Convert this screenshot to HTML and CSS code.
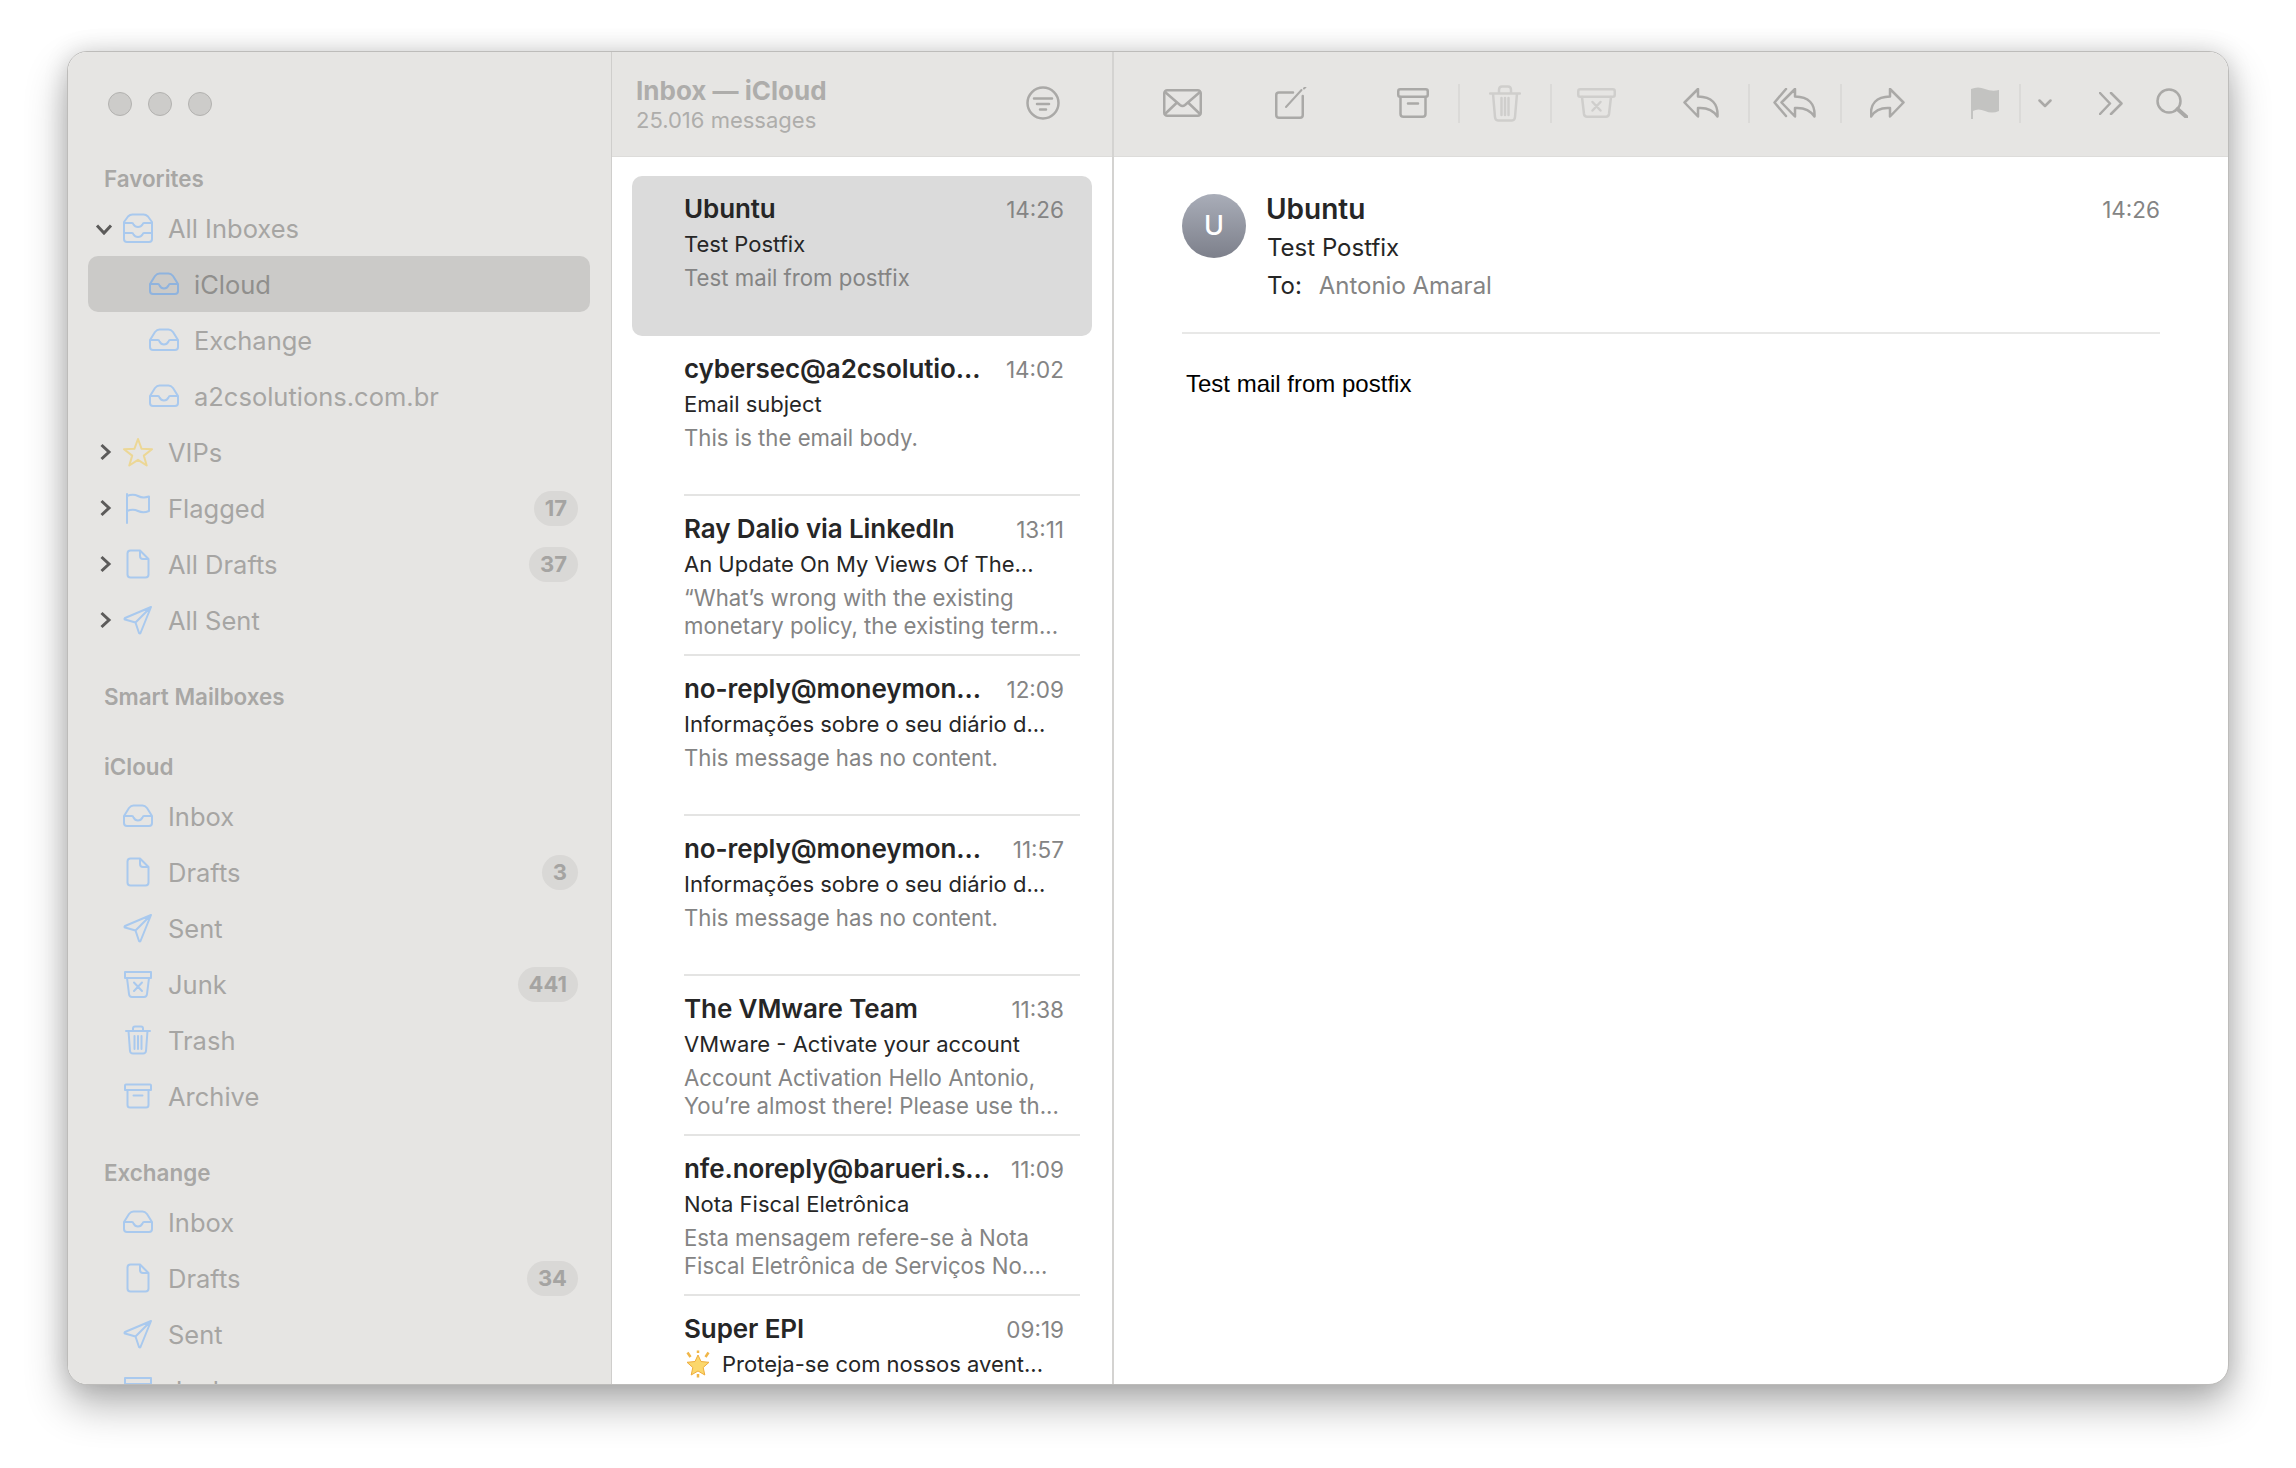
FILE: index.html
```html
<!DOCTYPE html>
<html lang="en">
<head>
    <meta charset="UTF-8">
    <meta name="viewport" content="width=device-width, initial-scale=1.0">
    <title>Inbox — iCloud</title>
    <link rel="stylesheet" href="styles.css">
</head>
<body>

<svg class="sprites" width="0" height="0">
    <symbol id="i-inbox" viewBox="0 0 32 32"><path d="M2 16 L7 8 Q9 5.500 11.500 5.500 H20.500 Q23 5.500 25 8 L30 16 V23 Q30 26 27 26 H5 Q2 26 2 23 Z M2 16 H10 Q11 16 11.500 17.500 Q13 20.500 16 20.500 Q19 20.500 20.500 17.500 Q21 16 22 16 H30"/></symbol>
    <symbol id="i-inboxes" viewBox="0 0 32 32"><path d="M2 10 L6 4.500 Q8 2.500 10.500 2.500 H21.500 Q24 2.500 26 4.500 L30 10 V27 Q30 30 27 30 H5 Q2 30 2 27 Z M2 11 H10 Q11 11 11.500 12.500 Q13 15 16 15 Q19 15 20.500 12.500 Q21 11 22 11 H30 M2 21 H10 Q11 21 11.500 22.500 Q13 25 16 25 Q19 25 20.500 22.500 Q21 21 22 21 H30"/></symbol>
    <symbol id="i-star" viewBox="0 0 32 32"><path d="M16 3 L19.600 12.800 L30 13.200 L21.800 19.600 L24.700 29.500 L16 23.800 L7.300 29.500 L10.200 19.600 L2 13.200 L12.400 12.800 Z"/></symbol>
    <symbol id="i-flag" viewBox="0 0 32 32"><path d="M5 2 V31 M5 4 Q11 1.500 16 4 T27 4.500 V19 Q21 21.500 16 19 T5 19"/></symbol>
    <symbol id="i-doc" viewBox="0 0 32 32"><path d="M8.500 2.500 H18 L26.500 11 V26.500 Q26.500 29.500 23.500 29.500 H8.500 Q5.500 29.500 5.500 26.500 V5.500 Q5.500 2.500 8.500 2.500 Z M18 2.500 V8 Q18 11 21 11 H26.500"/></symbol>
    <symbol id="i-sent" viewBox="0 0 32 32"><path d="M29 3 L3 14 Q2 15 3 15.500 L13.500 18.500 L17 29 Q18 30 18.500 29 Z M13.500 18.500 L29 3"/></symbol>
    <symbol id="i-junk" viewBox="0 0 32 32"><path d="M3 4 H29 V10 H3 Z M5 10 L7 26 Q7.300 29 10 29 H22 Q24.700 29 25 26 L27 10 M12 14.500 L20 23 M20 14.500 L12 23"/></symbol>
    <symbol id="i-trash" viewBox="0 0 32 32"><path d="M4 7 H28 M11 7 V4.500 Q11 2.500 13 2.500 H19 Q21 2.500 21 4.500 V7 M6.500 7 L8 27 Q8.300 29.500 11 29.500 H21 Q23.700 29.500 24 27 L25.500 7 M12.500 12 V25 M16 12 V25 M19.500 12 V25"/></symbol>
    <symbol id="i-archive" viewBox="0 0 32 32"><path d="M4 4.500 H28 Q29 4.500 29 5.500 V10 H3 V5.500 Q3 4.500 4 4.500 Z M5.500 10 V25 Q5.500 27.500 8 27.500 H24 Q26.500 27.500 26.500 25 V10 M11.500 15.500 H20.500"/></symbol>
    <symbol id="i-chev" viewBox="0 0 20 20"><path d="M7.500 3 L15 10 L7.500 17"/></symbol>
</svg>

<div class="window">

    <aside class="sidebar">
        <div class="lights"><span></span><span></span><span></span></div>

        <section class="group">
            <h3>Favorites</h3>
            <div class="row"><svg class="chev open"><use href="#i-chev"/></svg><svg class="ico"><use href="#i-inboxes"/></svg><span>All Inboxes</span></div>
            <div class="row nested selected"><svg class="ico"><use href="#i-inbox"/></svg><span>iCloud</span></div>
            <div class="row nested"><svg class="ico"><use href="#i-inbox"/></svg><span>Exchange</span></div>
            <div class="row nested"><svg class="ico"><use href="#i-inbox"/></svg><span>a2csolutions.com.br</span></div>
            <div class="row"><svg class="chev"><use href="#i-chev"/></svg><svg class="ico star"><use href="#i-star"/></svg><span>VIPs</span></div>
            <div class="row"><svg class="chev"><use href="#i-chev"/></svg><svg class="ico"><use href="#i-flag"/></svg><span>Flagged</span><b class="badge">17</b></div>
            <div class="row"><svg class="chev"><use href="#i-chev"/></svg><svg class="ico"><use href="#i-doc"/></svg><span>All Drafts</span><b class="badge">37</b></div>
            <div class="row"><svg class="chev"><use href="#i-chev"/></svg><svg class="ico"><use href="#i-sent"/></svg><span>All Sent</span></div>
        </section>

        <section class="group">
            <h3>Smart Mailboxes</h3>
        </section>

        <section class="group">
            <h3>iCloud</h3>
            <div class="row plain"><svg class="ico"><use href="#i-inbox"/></svg><span>Inbox</span></div>
            <div class="row plain"><svg class="ico"><use href="#i-doc"/></svg><span>Drafts</span><b class="badge">3</b></div>
            <div class="row plain"><svg class="ico"><use href="#i-sent"/></svg><span>Sent</span></div>
            <div class="row plain"><svg class="ico"><use href="#i-junk"/></svg><span>Junk</span><b class="badge">441</b></div>
            <div class="row plain"><svg class="ico"><use href="#i-trash"/></svg><span>Trash</span></div>
            <div class="row plain"><svg class="ico"><use href="#i-archive"/></svg><span>Archive</span></div>
        </section>

        <section class="group">
            <h3>Exchange</h3>
            <div class="row plain"><svg class="ico"><use href="#i-inbox"/></svg><span>Inbox</span></div>
            <div class="row plain"><svg class="ico"><use href="#i-doc"/></svg><span>Drafts</span><b class="badge">34</b></div>
            <div class="row plain"><svg class="ico"><use href="#i-sent"/></svg><span>Sent</span></div>
            <div class="row plain"><svg class="ico"><use href="#i-junk"/></svg><span>Junk</span></div>
        </section>
    </aside>

    <section class="list">
        <header class="list-head">
            <div class="list-title">
                <h1>Inbox — iCloud</h1>
                <p>25.016 messages</p>
            </div>
            <svg class="filter" width="34" height="34" viewBox="0 0 34 34"><circle cx="17" cy="17" r="15.500"/><path d="M8 12.500 H26 M11 18 H23 M14 23.500 H20"/></svg>
        </header>

        <div class="messages">
            <article class="msg selected">
                <div class="msg-top"><strong>Ubuntu</strong><time>14:26</time></div>
                <div class="subject">Test Postfix</div>
                <p class="preview">Test mail from postfix</p>
            </article>
            <article class="msg">
                <div class="msg-top"><strong>cybersec@a2csolutio...</strong><time>14:02</time></div>
                <div class="subject">Email subject</div>
                <p class="preview">This is the email body.</p>
            </article>
            <article class="msg">
                <div class="msg-top"><strong>Ray Dalio via LinkedIn</strong><time>13:11</time></div>
                <div class="subject">An Update On My Views Of The...</div>
                <p class="preview">“What’s wrong with the existing<br>monetary policy, the existing term...</p>
            </article>
            <article class="msg">
                <div class="msg-top"><strong>no-reply@moneymon...</strong><time>12:09</time></div>
                <div class="subject">Informações sobre o seu diário d...</div>
                <p class="preview">This message has no content.</p>
            </article>
            <article class="msg">
                <div class="msg-top"><strong>no-reply@moneymon...</strong><time>11:57</time></div>
                <div class="subject">Informações sobre o seu diário d...</div>
                <p class="preview">This message has no content.</p>
            </article>
            <article class="msg">
                <div class="msg-top"><strong>The VMware Team</strong><time>11:38</time></div>
                <div class="subject">VMware - Activate your account</div>
                <p class="preview">Account Activation Hello Antonio,<br>You’re almost there! Please use th...</p>
            </article>
            <article class="msg">
                <div class="msg-top"><strong>nfe.noreply@barueri.s...</strong><time>11:09</time></div>
                <div class="subject">Nota Fiscal Eletrônica</div>
                <p class="preview">Esta mensagem refere-se à Nota<br>Fiscal Eletrônica de Serviços No....</p>
            </article>
            <article class="msg">
                <div class="msg-top"><strong>Super EPI</strong><time>09:19</time></div>
                <div class="subject">
                    <svg class="sparkle" width="28" height="28" viewBox="0 0 28 28">
                        <path class="sparkle-star" d="M14 5 L17 11.500 L25 12.300 L19.200 17.500 L20.800 25 L14 21 L7.200 25 L8.800 17.500 L3 12.300 L11 11.500 Z"/>
                        <path class="sparkle-rays" d="M3.500 2.500 L6.500 7 M24.500 2.500 L21.500 7 M14 0.500 V3 M14 24 V27.500"/>
                    </svg>
                    Proteja-se com nossos avent...
                </div>
            </article>
        </div>
    </section>

    <main class="detail">
        <div class="toolbar">
            <svg class="tool t-mail" width="39" height="28" viewBox="0 0 39 28"><rect x="1.250" y="1.250" width="36.500" height="25.500" rx="3"/><path d="M2 3 L17 16 Q19.500 18 22 16 L37 3 M2 25 L13.500 14 M37 25 L25.500 14"/></svg>
            <svg class="tool t-compose" width="32" height="32" viewBox="0 0 32 32"><path d="M18 5.500 H4 Q1.250 5.500 1.250 8 V28 Q1.250 30.750 4 30.750 H25 Q27.750 30.750 27.750 28 V9"/><path class="thin" d="M11 20 L26.500 3"/><path class="thin" d="M29 1.500 L30.500 0"/></svg>
            <svg class="tool t-archive" width="32" height="30" viewBox="0 0 32 30"><rect x="1.250" y="1.250" width="29.500" height="7.500" rx="2"/><path d="M3.500 9 V26 Q3.500 28.750 6.500 28.750 H25.500 Q28.500 28.750 28.500 26 V9 M11 15.500 H21"/></svg>
            <i class="sep s-1"></i>
            <svg class="tool off t-trash" width="32" height="37" viewBox="0 0 32 37"><path d="M1 8.500 H31 M10 8.500 V5 Q10 1.500 13 1.500 H19 Q22 1.500 22 5 V8.500 M4 8.500 L6 32 Q6.300 35.500 9 35.500 H23 Q25.700 35.500 26 32 L28 8.500 M12.500 13 V30 M16 13 V30 M19.500 13 V30"/></svg>
            <i class="sep s-2"></i>
            <svg class="tool off t-junk" width="39" height="30" viewBox="0 0 39 30"><rect x="1.250" y="1.250" width="36.500" height="7.500" rx="2"/><path d="M5 9 L7 26 Q7.400 28.750 10 28.750 H29 Q31.600 28.750 32 26 L34 9 M15.500 14 L23.500 22.500 M23.500 14 L15.500 22.500"/></svg>
            <svg class="tool t-reply" width="36" height="30" viewBox="0 0 36 30"><path d="M15 1 L1.500 14.500 L15 28.500 V20 Q28 19 34.500 28.500 Q35.500 9 15 8.500 Z"/></svg>
            <i class="sep s-3"></i>
            <svg class="tool t-replyall" width="43" height="30" viewBox="0 0 43 30"><path d="M22 1 L8.500 14.500 L22 28.500 V20 Q35 19 41.500 28.500 Q42.500 9 22 8.500 Z M13 1 L1.500 14.500 L13 28"/></svg>
            <i class="sep s-4"></i>
            <svg class="tool t-forward" width="35" height="30" viewBox="0 0 35 30"><path d="M20 1 L33.500 14.500 L20 28.500 V20 Q7 19 1 28.500 Q-0.500 9 20 8.500 Z"/></svg>
            <svg class="t-flag" width="30" height="32" viewBox="0 0 30 32"><path class="flag-fill" d="M1 2 Q8 -1 15 2 T29 3 V24 Q22 27 15 24 T3 24 V32 H1 Z"/></svg>
            <i class="sep s-5"></i>
            <svg class="tool t-chev" width="14" height="9" viewBox="0 0 14 9"><path d="M1.500 1.500 L7 7 L12.500 1.500"/></svg>
            <svg class="tool t-more" width="24" height="23" viewBox="0 0 24 23"><path d="M1 1 L11 11.500 L1 22 M12 1 L22.500 11.500 L12 22"/></svg>
            <svg class="tool t-search" width="32" height="30" viewBox="0 0 32 30"><circle cx="13" cy="13" r="11.500"/><path class="thick" d="M21.500 21 L30.500 29"/></svg>
        </div>

        <div class="message">
            <div class="message-head">
                <div class="avatar">U</div>
                <div class="meta">
                    <div class="from">Ubuntu</div>
                    <div class="meta-subject">Test Postfix</div>
                    <div class="to">To: <span>Antonio Amaral</span></div>
                </div>
                <time>14:26</time>
            </div>
            <p class="body-text">Test mail from postfix</p>
        </div>
    </main>

</div>

</body>
</html>
```

FILE: styles.css
```css
* {
    box-sizing: border-box;
}
body {
    margin: 0;
    padding: 51px 67px 0 67px;
    height: 1468px;
    overflow: hidden;
    background-color: #fff;
    font-family: Inter, "Noto Sans", sans-serif;
}
.sprites {
    position: absolute;
}
.window {
    display: flex;
    height: 1334px;
    border: 1px solid #bdbcba;
    border-radius: 20px;
    overflow: hidden;
    background-color: #fff;
    box-shadow: 0 20px 42px rgba(0,0,0,0.3), 0 0 24px rgba(0,0,0,0.14);
}

/* sidebar */
.sidebar {
    flex: 0 0 544px;
    height: 100%;
    overflow: hidden;
    background-color: #e6e5e3;
    border-right: 1px solid #cfcecc;
}
.lights {
    display: flex;
    gap: 16px;
    align-items: center;
    height: 104px;
    padding-left: 40px;
}
.lights span {
    width: 24px;
    height: 24px;
    border-radius: 50%;
    background-color: #cdccca;
    border: 1px solid #b3b2b0;
}
.group {
    margin-top: 26px;
}
.lights + .group {
    margin-top: 0;
}
.group h3 {
    display: flex;
    align-items: center;
    height: 44px;
    margin: 0;
    padding-left: 36px;
    font-size: 22.400px;
    font-weight: 600;
    color: #a8a7a5;
}
.row {
    display: flex;
    align-items: center;
    height: 56px;
    margin: 0 21px 0 20px;
    padding: 0 12px 0 6px;
    border-radius: 10px;
    font-size: 25.500px;
    color: #a6a5a3;
}
.row.plain {
    padding-left: 34px;
}
.row.nested {
    padding-left: 60px;
}
.row.selected {
    background-color: #cbcac8;
    color: #908f8d;
}
.chev {
    flex: none;
    width: 20px;
    height: 20px;
    margin-right: 8px;
    fill: none;
    stroke: #5c5b5a;
    stroke-width: 3;
}
.chev.open {
    transform: rotate(90deg);
}
.ico {
    flex: none;
    width: 32px;
    height: 32px;
    margin-right: 14px;
    fill: none;
    stroke: #a9c9ee;
    stroke-width: 2;
    stroke-linejoin: round;
    stroke-linecap: round;
}
.selected .ico {
    stroke: #8fb3de;
}
.ico.star {
    stroke: #ecd795;
}
.badge {
    margin-left: auto;
    height: 35px;
    padding: 0 11px;
    border-radius: 18px;
    background-color: #d9d8d6;
    font-size: 22px;
    font-weight: 700;
    line-height: 35px;
    color: #a5a4a2;
}

/* message list */
.list {
    flex: 0 0 502px;
    height: 100%;
    overflow: hidden;
    border-right: 2px solid #d4d3d1;
}
.list-head {
    display: flex;
    align-items: center;
    justify-content: space-between;
    height: 105px;
    padding: 0 52px 0 24px;
    background-color: #e6e5e3;
    border-bottom: 1px solid #dddcda;
}
.list-title {
    margin-bottom: 3px;
}
.list-head h1 {
    margin: 0;
    font-size: 26px;
    font-weight: 700;
    line-height: 36px;
    color: #aeadab;
}
.list-head p {
    margin: -2px 0 0;
    font-size: 22px;
    line-height: 26px;
    color: #aeadab;
}
.filter {
    margin-bottom: 2px;
    fill: none;
    stroke: #aaa9a7;
    stroke-width: 2.500;
    stroke-linecap: round;
}
.messages {
    padding: 19px 0 0 20px;
}
.msg {
    position: relative;
    width: 460px;
    height: 160px;
    padding: 14px 28px 0 52px;
    border-radius: 10px;
}
.msg::after {
    content: "";
    position: absolute;
    left: 52px;
    right: 12px;
    bottom: 0;
    height: 2px;
    background-color: #e4e4e3;
}
.msg.selected {
    background-color: #dbdbdb;
}
.msg.selected::after {
    display: none;
}
.msg-top {
    display: flex;
    align-items: center;
    justify-content: space-between;
    height: 36px;
}
.msg-top strong {
    font-size: 26px;
    font-weight: 600;
    letter-spacing: -0.1px;
    color: #262626;
    white-space: nowrap;
}
.msg-top time {
    margin-top: 2px;
    font-size: 22.500px;
    color: #848484;
}
.subject {
    display: flex;
    align-items: center;
    gap: 10px;
    height: 32px;
    margin-top: 2px;
    font-size: 22px;
    color: #262626;
    white-space: nowrap;
}
.preview {
    margin: 4px 0 0;
    font-size: 22.200px;
    line-height: 28px;
    color: #848484;
    white-space: nowrap;
}
.sparkle {
    flex: none;
}
.sparkle-star {
    fill: #fbd76b;
    stroke: #eead3d;
}
.sparkle-rays {
    fill: none;
    stroke: #f0b648;
    stroke-width: 2.500;
}

/* toolbar and reading pane */
.detail {
    flex: 1;
    height: 100%;
    overflow: hidden;
}
.toolbar {
    display: flex;
    align-items: center;
    height: 105px;
    padding-bottom: 2px;
    background-color: #e6e5e3;
    border-bottom: 1px solid #dddcda;
}
.tool {
    flex: none;
    fill: none;
    stroke: #aaa9a7;
    stroke-width: 2.500;
    stroke-linejoin: round;
    stroke-linecap: round;
}
.tool.off {
    stroke: #cfcecc;
}
.tool .thin {
    stroke-width: 2;
}
.tool .thick {
    stroke-width: 4;
}
.sep {
    flex: none;
    width: 2px;
    height: 39px;
    background-color: #dbdad8;
}
.t-mail { margin-left: 49px; }
.t-compose { margin-left: 73px; }
.t-archive { margin-left: 90px; }
.s-1 { margin-left: 29px; }
.t-trash { margin-left: 29px; }
.s-2 { margin-left: 29px; }
.t-junk { margin-left: 25px; }
.t-reply { margin-left: 67px; }
.s-3 { margin-left: 29px; }
.t-replyall { margin-left: 23px; }
.s-4 { margin-left: 24px; }
.t-forward { margin-left: 28px; }
.t-flag { flex: none; margin-left: 65px; }
.flag-fill { fill: #c3c3c1; }
.s-5 { margin-left: 19px; }
.t-chev { margin-left: 17px; }
.t-more { margin-left: 47px; }
.t-search { margin-left: 33px; }

.message {
    padding: 37px 68px 0;
}
.message-head {
    display: flex;
    align-items: flex-start;
    height: 140px;
    border-bottom: 2px solid #e8e8e7;
}
.avatar {
    flex: none;
    width: 64px;
    height: 64px;
    border-radius: 50%;
    background: linear-gradient(#a9adb8, #7d808b);
    color: #fff;
    font-size: 27px;
    font-weight: 500;
    line-height: 64px;
    text-align: center;
}
.meta {
    padding-left: 21px;
    color: #262626;
}
.from {
    height: 30px;
    margin-left: -1px;
    font-size: 28px;
    font-weight: 600;
    line-height: 30px;
}
.meta-subject {
    margin-top: 5px;
    font-size: 24px;
    line-height: 38px;
}
.to {
    margin-top: -1px;
    font-size: 24px;
    line-height: 40px;
}
.to span {
    margin-left: 10px;
    color: #848484;
}
.message-head time {
    margin: 1px 0 0 auto;
    font-size: 22.500px;
    line-height: 30px;
    color: #848484;
}
.body-text {
    margin: 36px 0 0 4px;
    font-family: "Liberation Sans", Arial, sans-serif;
    font-size: 24px;
    line-height: 28px;
    color: #000;
}
```
